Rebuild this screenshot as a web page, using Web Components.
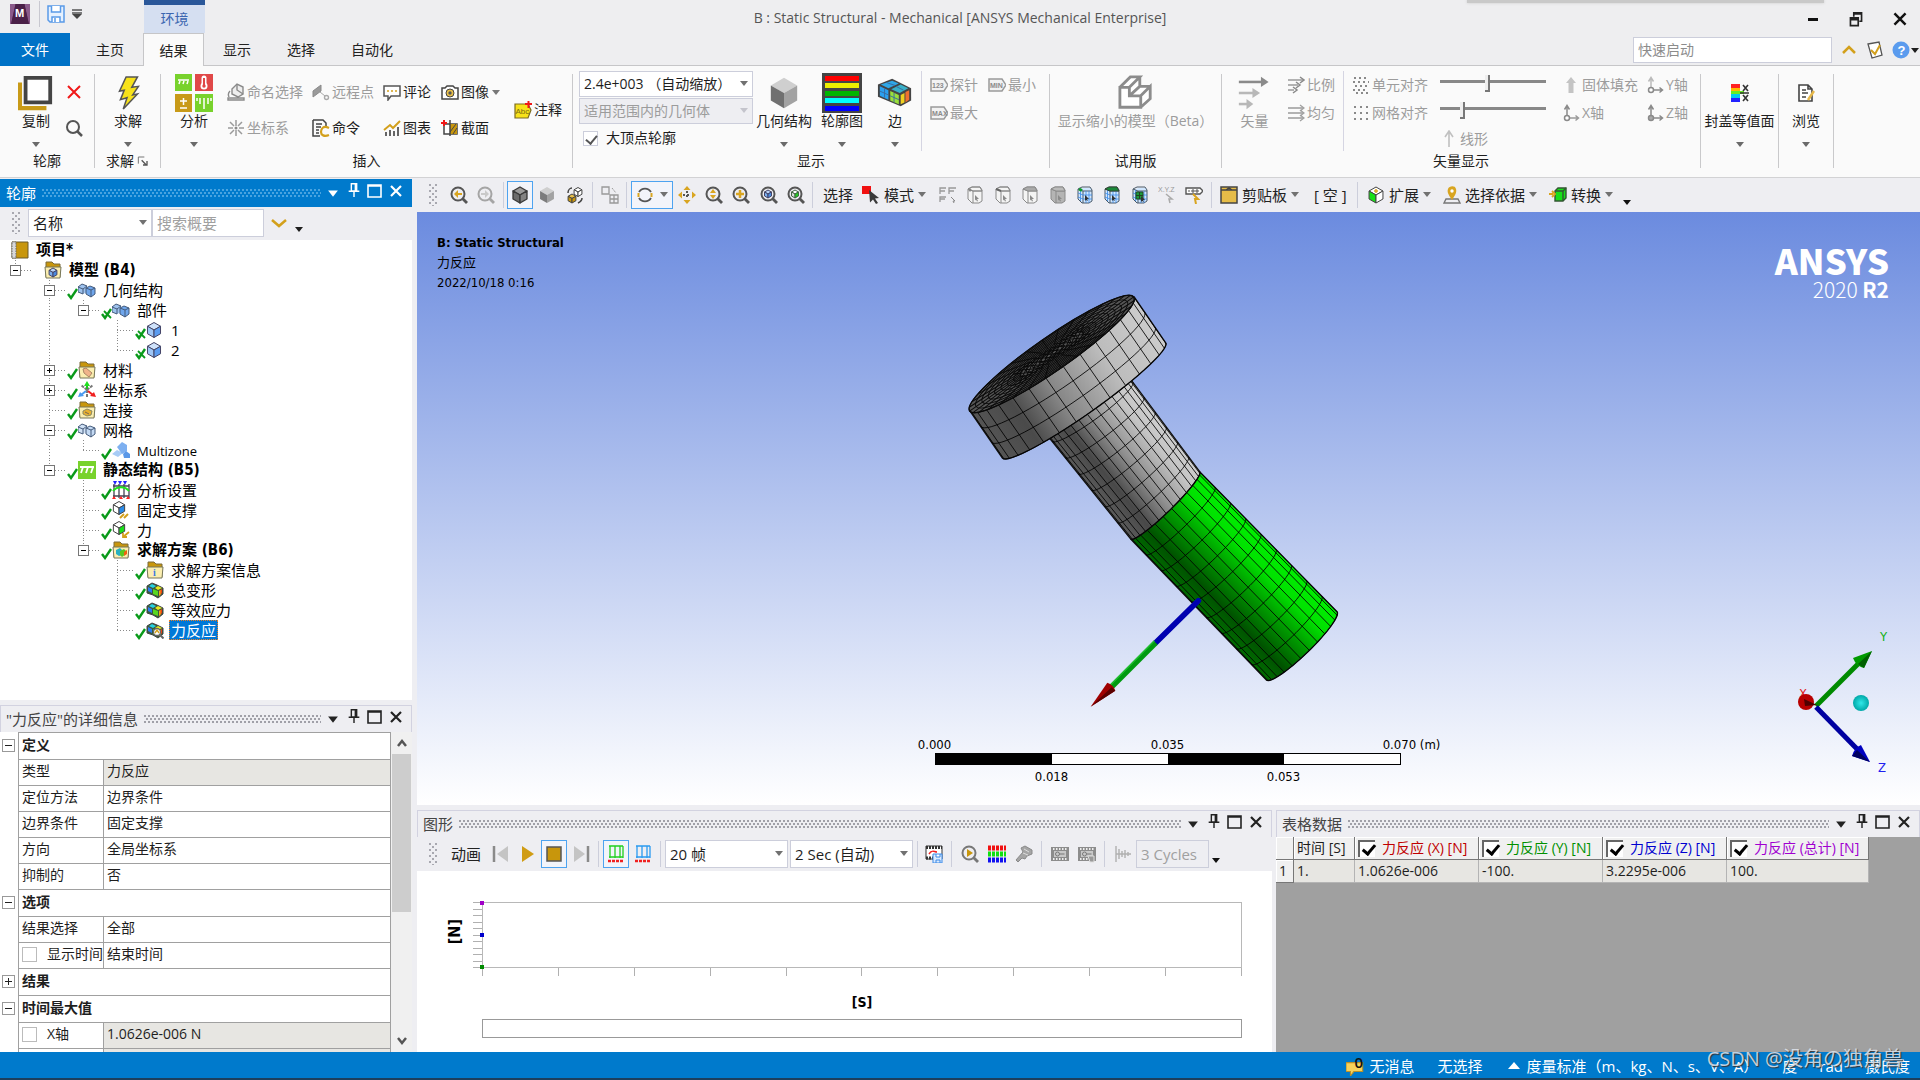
<!DOCTYPE html>
<html lang="zh-CN">
<head>
<meta charset="utf-8">
<title>B : Static Structural - Mechanical</title>
<style>
html,body{margin:0;height:100%}
body{font:14px/18px "Open Sans","Noto Sans CJK SC",sans-serif;color:#1e1e1e;background:#eeeef2;overflow:hidden}
</style>
</head>
<body>
<mech-app></mech-app>
<script>
/* ---------- helpers ---------- */
const BASE = `*{box-sizing:border-box}
button,select,input{font:inherit;color:inherit;margin:0}
button{background:none;border:0;padding:0}
.off{color:#9c9c9c}`;
function define(tag, css, html, after) {
  const t = document.createElement('template');
  customElements.define(tag, class extends HTMLElement {
    connectedCallback() {
      if (this.shadowRoot) return;
      t.innerHTML = `<style>${BASE}${css}</style>` + (typeof html === 'function' ? html(this) : html);
      this.attachShadow({mode: 'open'}).append(t.content.cloneNode(true));
      if (after) after(this.shadowRoot, this);
    }
  });
}
function cube(cx, cy, s, top, left, right, st = '#444', sw = 1) {
  const w = s * .87, h = s * .5, a = `stroke="${st}" stroke-width="${sw}" stroke-linejoin="round"`;
  return `<path d="M${cx} ${cy - s}l${w} ${h}l${-w} ${h}l${-w} ${-h}z" fill="${top}" ${a}/>` +
    `<path d="M${cx - w} ${cy - h}l${w} ${h}v${s}l${-w} ${-h}z" fill="${left}" ${a}/>` +
    `<path d="M${cx + w} ${cy - h}l${-w} ${h}v${s}l${w} ${-h}z" fill="${right}" ${a}/>`;
}
const mag = (st, inner, fill = 'none') => `<circle cx="8" cy="8" r="6.500" fill="${fill}" stroke="${st}" stroke-width="2"/><path d="M12.500 12.500l4.500 4.500" stroke="${st}" stroke-width="2.800"/>${inner}`;
const folder = inner => `<path d="M2 1h6l2 2h6v13H2z" fill="#c8960c" stroke="#7a6a3a" stroke-width="1"/><path d="M1 6h16l-1 11H2z" fill="#fbeeb0" stroke="#77775a" stroke-width="1"/>${inner}`;
const bars = (a, b) => `<path d="M0 6l4-3 5 2v6l-4 2-5-2z" fill="${a}"/><path d="M0 6l5 2 4-3M5 8v5M0 6v5l5 2" fill="none" stroke="#445a7a"/><path d="M8 7l4-2 5 2v6l-4 3-5-3z" fill="${b}"/><path d="M8 7l5 2 4-2M13 9v7M8 7v6l5 3 4-3V7l-5-2z" fill="none" stroke="#445a7a"/><path d="M0 6l4-3 5 2" fill="none" stroke="#445a7a"/>`;
const rainbow = `<path d="M1 5l5-3 5 2 6 3v6l-5 4-5-3-6-2z" fill="#3a5a3a" stroke="#444"/><path d="M2 6l4 2v4l-4-2z" fill="#2a7af0"/><path d="M3 5l3-2 4 2-3 2z" fill="#28d0e0"/><path d="M7 8l5 2v5l-5-2z" fill="#58d820"/><path d="M9 7l3-2 4 2-4 2z" fill="#e8e820"/><path d="M13 10l3-2v4l-3 3z" fill="#f04010"/><path d="M13 10l1.500-1v4.500L13 15z" fill="#f0b010"/>`;
const page = (top, left, right, st, extra = '') => `<path d="M2 3l4-2h8l2 3v11l-3 2H6l-4-4z" fill="${left}" stroke="${st}"/><path d="M2 3l5 2h9M7 5v12" fill="none" stroke="${st}"/><path d="M2 3l4-2h8l2 4H7z" fill="${top}" stroke="${st}"/>${extra}<path d="M9 9l4 4h-2l1 2-1 .5-1-2-1 1z" fill="${st}"/>`;
const tag3 = t => `<path d="M1 3h13l4 6-4 6H1z" fill="#f2f2f2" stroke="#9a9a9a" stroke-width="1.500"/><text x="2" y="12" font-size="7" font-weight="700" fill="#8a8a8a" font-family="Liberation Sans,sans-serif">${t}</text>`;
const axis = (hollow, up, side) => `<path d="M5 13V3M2.500 5.500L5 1.500l2.500 4" fill="none" stroke="${up}" stroke-width="1.500"/><path d="M8 14h8M13.500 11.500l3 2.500-3 2.500" fill="none" stroke="${side}" stroke-width="1.500"/><circle cx="5" cy="14" r="2.500" fill="${hollow}" stroke="#8a8a8a" stroke-width="1.500"/>`;
const film = `<path d="M0 2h18v14H0z" fill="#8c8c8c"/><path d="M2 4h14M2 14h14" stroke="#eee" stroke-width="2" stroke-dasharray="1.500 1.500"/><path d="M3 6h12v6H3z" fill="#c8c8c8"/><circle cx="6.500" cy="9" r="2" fill="none" stroke="#777"/><path d="M8.500 9h5" stroke="#777"/>`;
const mesh = `<path d="M3 4l4-2h8l1 2v11l-3 2H6l-4-4z" fill="#cfe6ff"/><path d="M2 3l4-2h8l2 3v11l-3 2H6l-4-4zM2 3l5 2h9M7 5v12" fill="none" stroke="#4a5a6a"/><path d="M10 5v12M13 5v12M7 9h9M7 13h9M2 7l5 2M2 11l5 2M4.500 4v11" stroke="#3a8ae8" stroke-width=".8"/>`;
const ICONS = {
  logo: `<path d="M0 0h18v18H0z" fill="#5a2a5a"/><path d="M0 0h5L1 18H0zM13 0h5v18h-1z" fill="#8a5a8a"/><path d="M5 0h8l4 18H1z" fill="#4a2048"/><text x="4.500" y="12" font-size="10" font-weight="700" fill="#fff" font-family="Liberation Sans,sans-serif">M</text>`,
  save: `<path d="M1 1h16v16H3l-2-2z" fill="#e6f1ff" stroke="#5a9ae8" stroke-width="1.500"/><path d="M4.500 1v6h9V1M5 17v-5h8v5M8 13v4" fill="#fff" stroke="#5a9ae8" stroke-width="1.500"/>`,
  qat: `<path d="M4 5h10M4 8h10" stroke="#555" stroke-width="1.500"/><path d="M4 9h10l-5 5z" fill="#444"/>`,
  down: `<path d="M5 7h8l-4 5z" fill="currentColor"/>`,
  min: `<path d="M4 9.500h10" stroke="#111" stroke-width="3"/>`,
  restore: `<path d="M4 8h7v7H4zM4 9.500h7M7 7V3.500h7V11h-2M7 4.500h7" fill="none" stroke="#222" stroke-width="1.500"/>`,
  close: `<path d="M4 4l10 10M14 4L4 14" stroke="currentColor" stroke-width="2.200"/>`,
  chevup: `<path d="M3 12l6-6 6 6" fill="none" stroke="#d3a01c" stroke-width="2.500"/>`,
  chevdown: `<path d="M2 6l7 6 7-6" fill="none" stroke="#d3a01c" stroke-width="2.500"/>`,
  checklist: `<path d="M2 3l11-2 3 13-10 3z" fill="#fff" stroke="#555" stroke-width="1.300"/><path d="M5 9l4 4 5-9" fill="none" stroke="#d3a01c" stroke-width="2"/>`,
  help: `<circle cx="9" cy="9" r="8.500" fill="#5a9bee"/><text x="5.500" y="14" font-size="13" font-weight="700" fill="#fff" font-family="Liberation Sans,sans-serif">?</text>`,
  copy: `<path d="M2 8v27h28" fill="none" stroke="#c89a18" stroke-width="4.500"/><path d="M8 3h26v26H8z" fill="#fff" stroke="#444" stroke-width="4"/>`,
  redx: `<path d="M3 3l12 12M15 3L3 15" stroke="#f01818" stroke-width="2"/>`,
  search: `<circle cx="8" cy="8" r="6" fill="none" stroke="#555" stroke-width="2"/><path d="M12 12l5 5" stroke="#555" stroke-width="2.500"/>`,
  solve: `<path transform="translate(3 0)" d="M14 2h12l-6 11 7-1-6 9 5-1L11 36l4-12-7 2 4-10-5 1z" fill="#f7e21a" stroke="#555" stroke-width="1.600"/>`,
  analysis: `<path d="M0 0h17v17H0z" fill="#78d22c"/><path d="M20 0h18v17H20z" fill="#e04848"/><path d="M0 20h17v18H0z" fill="#c89a18"/><path d="M20 20h18v18H20z" fill="#78d22c"/><path d="M3 6h11M5 7l-1 3M9 7l-1 3M13 7l-1 3" stroke="#fff" stroke-width="1.500"/><path d="M29 4v6" stroke="#fff" stroke-width="5" stroke-linecap="round"/><circle cx="29" cy="12" r="3.500" fill="#fff"/><path d="M29 4v7" stroke="#e04848" stroke-width="2"/><circle cx="29" cy="12" r="1.700" fill="#e04848"/><path d="M5 27h7M8.500 24v7M5 34h7" stroke="#fff" stroke-width="1.500"/><path d="M29 24v11M25 24v6M33 24v6M22 24v3M36 24v3" stroke="#fff" stroke-width="1.500"/>`,
  named: `<path d="M1 15h16v2H1zM5 6l5-5 6 3v7l-5 3-6-3z" fill="#eee" stroke="#8a8a8a" stroke-width="1.400"/><path d="M10 1v6l6 4M3 8c-2 2-2 4-1 6" fill="none" stroke="#8a8a8a" stroke-width="1.400"/>`,
  csys: `<path d="M9 1v6M9 11v6M1 9h5M12 9h5M3 3l4 4M15 3l-4 4M3 15l4-4M15 15l-4-4" stroke="#9a9a9a" stroke-width="1.500"/><circle cx="9" cy="9" r="1.500" fill="#8a8a8a"/>`,
  remote: `<path d="M1 8l8-6v6L1 14z" fill="#9a9a9a" stroke="#8a8a8a"/><path d="M8 9l5 4" stroke="#aaa"/><circle cx="14.500" cy="14.500" r="2" fill="none" stroke="#aaa" stroke-width="1.400"/>`,
  cmd: `<path d="M1 1h10l3 3v4M1 1v16h7" fill="none" stroke="#444" stroke-width="1.500"/><path d="M4 5h6M4 8h5M4 11h3M4 14h3" stroke="#444" stroke-width="1.500"/><path d="M17 9c-6-3-8 1-8 4s3 5 8 3" fill="none" stroke="#d3a01c" stroke-width="2.200"/>`,
  comment: `<path d="M1 3h16v10H8l-3 4v-4H1z" fill="#fff" stroke="#555" stroke-width="1.500"/><path d="M4 8h10" stroke="#d3a01c" stroke-width="1.500" stroke-dasharray="2"/>`,
  chart: `<path d="M1 11l6-5 3 3 7-7" fill="none" stroke="#d3a01c" stroke-width="2"/><path d="M3 17v-4M7 17v-6M11 17v-5M15 17V8" stroke="#555" stroke-width="1.800"/>`,
  camera: `<path d="M1 5h3l2-2h6l2 2h3v11H1z" fill="#fff" stroke="#444" stroke-width="1.500"/><circle cx="9" cy="10" r="4" fill="#e9c04a" stroke="#444"/><circle cx="9" cy="10" r="1.700" fill="#555"/>`,
  section: `<path d="M3 5h13v10H3z" fill="#fff" stroke="#444" stroke-width="1.500"/><path d="M9 5h7v10H9z" fill="#c8960c"/><path d="M9 13l6-8M12 15l4-6" stroke="#444"/><path d="M9 1v16" stroke="#444" stroke-width="1.500"/><path d="M0 4h6M3 1v6" stroke="#f01818" stroke-width="2"/>`,
  note: `<path d="M1 3h13l3 6-3 8H1z" fill="#f7e21a" stroke="#7a6a20" stroke-width="1.200"/><text x="1.500" y="13" font-size="8" fill="#7a6a10" font-family="Liberation Sans,sans-serif">Abc</text><path d="M11 3h7M14.500 0v7" stroke="#f01818" stroke-width="2"/>`,
  geo: cube(19, 19, 16, '#cfcfcf', '#707070', '#a2a2a2', 'none', 0),
  contour: `<path d="M0 0h40v40H0z" fill="#444"/><path d="M3 3h34v5H3z" fill="#f00"/><path d="M3 10h34v5H3z" fill="#ee0"/><path d="M3 18h34v5H3z" fill="#00b400"/><path d="M3 25h34v5H3z" fill="#0ff"/><path d="M3 33h34v5H3z" fill="#00f"/>`,
  edge: `<path d="M1 10l15-6 20 10v13L25 33 1 23z" fill="#444"/><path d="M4 10l12-4 7 3-11 5z" fill="#2fa8e8"/><path d="M15 15l10-5 8 4-9 5z" fill="#38b0c8"/><path d="M3 12l9 4v10l-9-4z" fill="#2aa0f0"/><path d="M14 17l9 4v10l-9-4z" fill="#9ae03a"/><path d="M25 21l4-2v10l-4 2z" fill="#f0d020"/><path d="M30 18l4-2v10l-4 3z" fill="#f07030"/><path d="M14 22l9 4M18 19v10M3 17l9 4M8 14v10M10 8l9 3M20 12l8 4" stroke="#3a6aa0"/>`,
  probe: tag3('123'), pmax: tag3('MAX'), pmin: tag3('MIN'),
  shrink: `<path d="M2 13L13 2h10v9l11 4v10L24 34H2z" fill="#fff"/><path d="M2 13h10v9h12v12H2zM2 13L13 2h10L12 13M23 2v10L12 22M24 22l10-10v13L24 34M23 12h11" fill="none" stroke="#8c8c8c" stroke-width="3"/>`,
  vector: `<path d="M1 7h28" stroke="#8a8a8a" stroke-width="3"/><path d="M27 1l9 6-9 6z" fill="#8a8a8a"/><path d="M1 20h18" stroke="#b8b8b8" stroke-width="3"/><path d="M17 14l9 6-9 6z" fill="#b8b8b8"/><path d="M1 33h11" stroke="#b8b8b8" stroke-width="3"/><path d="M10 27l8 6-8 6z" fill="#b8b8b8"/>`,
  prop: `<path d="M1 4h15M1 9h10M1 14h6" stroke="#9a9a9a" stroke-width="1.500"/><path d="M13 1l4 3-4 3M9 6l4 3-4 3M6 11l4 3-4 3" fill="none" stroke="#8a8a8a" stroke-width="1.500"/>`,
  uni: `<path d="M1 4h15M1 9h15M1 14h15" stroke="#9a9a9a" stroke-width="1.500"/><path d="M13 1l4 3-4 3M13 6l4 3-4 3M13 11l4 3-4 3" fill="none" stroke="#a0a0a0" stroke-width="1.300"/>`,
  elal: `<path d="M2 2h14M1 6h16M3 10h14M1 14h15M4 17h13" stroke="#8a8a8a" stroke-width="2" stroke-dasharray="2 3"/>`,
  gral: `<path d="M2 3h15M2 9h15M2 15h15" stroke="#8a8a8a" stroke-width="2" stroke-dasharray="2 4"/>`,
  linef: `<path d="M9 17V2M5 7l4-6 4 6" fill="none" stroke="#c0c0c0" stroke-width="1.600"/>`,
  solid: `<path d="M9 1l5 6h-2.500v10h-5V7H4z" fill="#c4c4c4"/>`,
  ax: axis('#fff', '#8a8a8a', '#9a9a9a'), ay: axis('#fff', '#bbb', '#8a8a8a'), az: axis('#aaa', '#8a8a8a', '#8a8a8a'),
  capped: `<path d="M0 0h9v4H0z" fill="#f22"/><path d="M0 4h9v3H0z" fill="#fb0"/><path d="M0 7h13v3H0z" fill="#6e2"/><path d="M0 10h9v4H0z" fill="#0ce"/><path d="M0 14h9v4H0z" fill="#22f"/><path d="M12 1l5 6M17 1l-5 6M12 11l5 6M17 11l-5 6M9 9h9" stroke="#333" stroke-width="1.600"/>`,
  browse: `<path d="M2 1h9l4 4v12H2zM11 1v4h4" fill="#fff" stroke="#444" stroke-width="1.600"/><path d="M5 6h4M5 9h6M5 13h4" stroke="#444" stroke-width="1.400"/><path d="M17 7l-6 9" stroke="#e6b84a" stroke-width="2.500"/>`,
  launch: `<path d="M2 13V3h9" fill="none" stroke="#777" stroke-width="1.500"/><path d="M7 8l7 7M15 9v6H9" fill="none" stroke="#555" stroke-width="2"/>`,
  pin: `<path d="M6 2h6v8H6zM10.500 2v8M3 10.500h12M9 11v6" fill="none" stroke="currentColor" stroke-width="1.600"/>`,
  max: `<path d="M2 3h13v12H2zM2 4h13" fill="none" stroke="currentColor" stroke-width="1.600"/>`,
  book: `<path d="M1 1h16v16H1z" fill="#c8960c" stroke="#6a5a2a"/><path d="M1 1h4v16H1z" fill="#d8d8d8" stroke="#666" stroke-dasharray="1.500 1"/>`,
  model: folder(cube(9, 11.500, 4.500, '#b8d4f8', '#7ab0f0', '#4a8ae0', '#446')),
  geom: bars('#9ec2ee', '#6fa6ec'), meshi: bars('#cfe0f4', '#c4daf4'),
  body: cube(8, 9, 7.500, '#cfe2fa', '#9ec6f6', '#5a9cf0', '#446'),
  mat: folder(`<path d="M5 8l3-1 6 5-3 4-5-4z" fill="#f0b48a" stroke="#a86"/>`),
  cs: `<path d="M9 9L3 4M9 9l6-5M9 9v8" stroke="#777" stroke-width="2" stroke-dasharray="3 1"/><path d="M9 8V2" stroke="#20c020" stroke-width="2"/><path d="M6 5l3-5 3 5z" fill="#20e020"/><path d="M8 10l-5 4" stroke="#4a9af0" stroke-width="2"/><path d="M0 16l2-5 4 4z" fill="#4a9af0"/><path d="M10 10l5 4" stroke="#f02020" stroke-width="2"/><path d="M18 16l-6-1 4-4z" fill="#f02020"/>`,
  conn: folder(`<path d="M5 10l4-2 5 2-1 4-4 1-4-2z" fill="#e8b030" stroke="#886"/><path d="M7 11l4 2" stroke="#765"/>`),
  mz: `<path d="M0 13l5-4 6 3-5 4z" fill="#a8ccf6"/><path d="M5 6l5-5 5 3v6l-5 3z" fill="#7eb0f0"/><path d="M11 13l3-3 4 3v4h-6z" fill="#5a98e8"/>`,
  stat: `<path d="M0 0h18v18H0z" fill="#78d22c"/><path d="M2 6h14M5 6l-2 6M10 6l-2 6M15 6l-2 6" stroke="#fff" stroke-width="1.800"/>`,
  aset: `<path d="M1 5h16M1 15h16M2 3v14M7 3v14M12 3v14M17 3v14" stroke="#445" stroke-width="1.300"/><path d="M1 10c4-5 12-5 16 0" fill="none" stroke="#20e020" stroke-width="2"/><path d="M1 0h4L3 4zM6 0h4L8 4zM11 0h4l-2 4z" fill="#22f"/><path d="M0 18l2-3 2 3zM7 18l2-3 2 3zM14 18l2-3 2 3z" fill="#f22"/>`,
  fix: cube(7, 7, 6.500, '#fff', '#fff', '#2a8ae8') + `<path d="M8 17l4-4M12 17l4-4" stroke="#d3a01c" stroke-width="2"/>`,
  force: cube(7, 7, 6.500, '#fff', '#fff', '#18e018') + `<path d="M17 11l-6 5M15 16h-4v-4" fill="none" stroke="#d3a01c" stroke-width="1.800"/>`,
  sol: folder(`<path d="M4 9l4-2 2 2v5l-3 1-3-2z" fill="#28b0c0"/><path d="M8 10l4-2 2 2v3l-4 3-2-2z" fill="#58c820"/><path d="M12 11l3-2v4l-3 2z" fill="#f06010"/>`),
  info: folder(`<text x="7" y="15" font-size="10" font-weight="700" fill="#3a7ae0" font-family="Liberation Serif,serif">i</text>`),
  res: rainbow,
  fr: rainbow + `<circle cx="11" cy="11" r="3.500" fill="#fff" stroke="#666" stroke-width="1.300"/><path d="M13.500 13.500l4 4" stroke="#666" stroke-width="2"/><path d="M9 12l2-3 2 3" stroke="#d3a01c" fill="none" stroke-width="1.400"/>`,
  zback: mag('#555', `<path d="M4 8l4-4v3h4v2H8v3z" fill="#d9a520"/>`), zfwd: mag('#a5a5a5', `<path d="M12 8L8 4v3H4v2h4v3z" fill="#c9c9c9"/>`),
  shade: cube(9, 9, 8, '#9a9a9a', '#6c6c6c', '#828282', '#3a3a3a', 1.400),
  shade2: cube(9, 9, 8, '#cfcfcf', '#7c7c7c', '#a2a2a2', 'none', 0),
  swap: cube(12, 6, 4.500, '#fff', '#fff', '#fff') + cube(6, 12.500, 4.500, '#e9c04a', '#c8960c', '#c8960c') + `<path d="M2 7c0-3 2-5 4-5M16 12c0 3-2 4-4 5" fill="none" stroke="#444" stroke-width="1.500"/>`,
  vis: `<path d="M1 1h7v7H1zM9 9h8v8H9zM13 9v8M9 13h8" fill="none" stroke="#999" stroke-width="1.300"/><path d="M11 2l4 5" stroke="#999" stroke-dasharray="2 1"/>`,
  rot: `<path d="M3 6a7 7 0 0 1 12 0M3 12a7 7 0 0 0 12 0" fill="none" stroke="#555" stroke-width="1.800"/><path d="M2.500 7v4M15.500 7v4" stroke="#d9a520" stroke-width="2"/>`,
  move: `<path d="M9 0l3.500 4h-7zM9 18l3.500-4h-7zM0 9l4-3.500v7zM18 9l-4-3.500v7z" fill="#d9a520"/><path d="M9 5v8M5 9h8" stroke="#555" stroke-width="2" stroke-dasharray="2"/>`,
  zud: mag('#555', `<path d="M8 3l3 4H5zM8 13l3-4H5z" fill="#d9a520"/>`), zin: mag('#555', `<path d="M8 4v8M4 8h8" stroke="#d9a520" stroke-width="2.500"/>`),
  zfit: mag('#555', cube(8, 8, 4, '#b8d4f8', '#7ab0f0', '#4a8ae0', '#446')), zsel: mag('#555', cube(8, 8, 4, '#fff', '#ddd', '#2c2', '#464')),
  rcur: `<path d="M0 0h9v8H0z" fill="#f01010"/><path d="M7 4l10 8-4 .5 3 4.500-2 1-3-4.500-3 3z" fill="#3a3a3a"/>`,
  sel0: `<path d="M1 8V2h6M10 8V2h7M1 16v-5h6M1 5h5M10 5h5M1 13h5" fill="none" stroke="#999" stroke-width="1.300"/><path d="M12 11l4 4h-2l1 2" stroke="#888" fill="none"/>`,
  sel1: page('none', '#f4f4f4', '', '#8a8a8a', '<circle cx="4" cy="4" r="1.500" fill="#888"/>'),
  sel2: page('none', '#f4f4f4', '', '#8a8a8a', '<path d="M2 3l5 2" stroke="#666" stroke-width="2"/>'),
  sel3: page('#aaa', '#f4f4f4', '', '#8a8a8a'), sel4: page('#bbb', '#b4b4b4', '', '#8a8a8a'),
  sel5: mesh + `<path d="M3 3l3 1.500" stroke="#0a9a2a" stroke-width="3"/><path d="M9 9l4 4h-2l1 2-2-1-1 1z" fill="#333"/>`,
  sel6: mesh + `<path d="M2 3l4-2h8l2 4H7z" fill="#1a8a3a" stroke="#343"/><path d="M9 9l4 4h-2l1 2-2-1-1 1z" fill="#333"/>`,
  sel7: mesh + `<path d="M5 6h7v7H5z" fill="#1a9a3a" stroke="#242"/><path d="M5 9.500h7M8.500 6v7" stroke="#242"/><path d="M10 10l4 4h-2l1 2-2-1-1 1z" fill="#333"/>`,
  xyz: `<text x="0" y="6" font-size="7" fill="#999" font-family="Liberation Sans,sans-serif">X.Y.Z</text><path d="M8 8l6 5h-3l1 4" fill="none" stroke="#aaa" stroke-width="1.500"/>`,
  lbl: `<path d="M1 2h14l3 3-3 3H1z" fill="#fff" stroke="#555" stroke-width="1.400"/><path d="M4 4v2M7 4h2v2H7zM11 4h2v2h-2z" stroke="#555" fill="none"/><path d="M8 8l5 5h-3l1 5" fill="none" stroke="#d9a520" stroke-width="2"/>`,
  clip: `<path d="M1 1h16v16H1z" fill="#e6bc48" stroke="#444" stroke-width="1.500"/><path d="M1 4h16M6 4l3-2 3 2" stroke="#444" stroke-width="1.500" fill="none"/>`,
  ext: cube(9, 9, 8, '#fff', '#18e018', '#fff') + `<path d="M7 5h4M9 3v4" stroke="#d9a520" stroke-width="1.500"/>`,
  loc: `<path d="M1 17l2-4h12l2 4z" fill="none" stroke="#777" stroke-width="1.400"/><path d="M9 14C5 8 4 6 5 3s7-4 8 0-1 6-4 11z" fill="#d9a520"/><circle cx="9" cy="5" r="1.700" fill="#fff"/>`,
  conv: `<path d="M6 5l3-3h8v10l-3 3H6z" fill="#18e018" stroke="#353" stroke-width="1.400"/><path d="M6 5h8v10M14 5l3-3" fill="none" stroke="#353" stroke-width="1.400"/><path d="M0 8h4M3 5l3 3-3 3" stroke="#d9a520" stroke-width="1.800" fill="none"/>`,
  first: `<path d="M2 1v16" stroke="#8a8a8a" stroke-width="2.500"/><path d="M16 1v16L5 9z" fill="#c4c4c4"/>`,
  last: `<path d="M16 1v16" stroke="#8a8a8a" stroke-width="2.500"/><path d="M2 1v16l11-8z" fill="#c4c4c4"/>`,
  play: `<path d="M3 1v16l12-8z" fill="#d09c14"/>`,
  stop: `<path d="M2 2h14v14H2z" fill="#c8960c" stroke="#555" stroke-width="1.500"/>`,
  g1: `<path d="M2 1h14M3 1v12M8 1v12M13 1v12M16 1v12M2 12h14" stroke="#20d020" stroke-width="1.300"/><path d="M1 16h16" stroke="#f02020" stroke-width="2.500" stroke-dasharray="3 1"/>`,
  g2: `<path d="M2 1h14M3 1v12M8 1v12M13 1v12M16 1v12M2 12h14" stroke="#2a9af0" stroke-width="1.300"/><path d="M1 16h16" stroke="#f02020" stroke-width="2.500" stroke-dasharray="3 1"/>`,
  exp: `<path d="M1 1h16v13H1z" fill="#fff" stroke="#333"/><path d="M1 2.500h16M1 13h8" stroke="#333" stroke-width="3" stroke-dasharray="2 1"/><path d="M4 9c3-5 5-2 8-2" fill="none" stroke="#f02020" stroke-width="1.500"/><path d="M8 9h9v9H8zM11 9v3h4V9M11 18v-3h4v3" fill="#dbeafd" stroke="#3a8ae8"/>`,
  zplay: mag('#777', `<path d="M6 4l6 4-6 4z" fill="#c8960c"/>`),
  rgb: `<path d="M0 3h18" stroke="#f01010" stroke-width="5" stroke-dasharray="3 1"/><path d="M0 9h18" stroke="#10e010" stroke-width="5" stroke-dasharray="3 1"/><path d="M0 15h18" stroke="#1010f0" stroke-width="5" stroke-dasharray="3 1"/>`,
  upd: `<path d="M1 15l7-8-2-4 4-2 7 4v4l-5 2-2 3-3-1-4 4z" fill="#a5a5a5" stroke="#8a8a8a"/><path d="M9 4l5 3M8 8l5 2" stroke="#ddd"/>`,
  film1: film, film2: film + `<path d="M10 11h6v6h-4z" fill="#999" stroke="#ddd"/>`,
  wave: `<path d="M2 1v16M2 9h15M5 4v10M8 6v6M11 5v8M14 7v4" stroke="#b0b0b0" stroke-width="1.400"/>`,
  msg: `<path d="M0 6h15v8H7l-3 4v-4H0z" fill="#f6d25a" stroke="#b8902a"/>`,
  up: `<path d="M3 12l6-7 6 7z" fill="#fff"/>`
};
define('ui-icon', ':host{display:inline-flex;flex:none}svg{display:block}', el => {
  const n = el.getAttribute('name'), s = +el.getAttribute('size') || 18, v = +el.getAttribute('box') || 18;
  return `<svg width="${s}" height="${s}" viewBox="0 0 ${v} ${v}" aria-hidden="true">${ICONS[n] || ''}</svg>`;
});
const ic = (n, s, b) => `<ui-icon name="${n}"${s ? ` size="${s}"` : ''}${b ? ` box="${b}"` : ''}></ui-icon>`;

/* ---------- title bar and tabs ---------- */
define('mech-titlebar', `
:host{display:block;height:66px;background:#eeeef0;border-bottom:1px solid #c6c6c8}
.top{display:flex;height:33px;align-items:flex-start}
.side{flex:1;display:flex;align-items:flex-start}
.quick{display:flex;align-items:center;width:144px;height:28px;padding-left:10px}
.quick i{width:1px;height:26px;background:#c8c8d0;margin:0 7px 0 9px}
.quick button{display:flex;margin-right:3px}
.env{width:61px;height:33px;background:#d5dff1;border-top:5px solid #2a579a;color:#3c66b0;text-align:center;line-height:28px}
h1{margin:0;font:inherit;color:#555;line-height:36px}
.right{justify-content:flex-end}
.shade{width:357px;height:3px;background:#c9c9c9;box-shadow:0 0 3px #c9c9c9}
.win{display:flex;gap:24px;padding:9px 10px 0 0;margin-left:-20px}
.win button{color:#111}
.tabs{display:flex;height:33px;align-items:flex-end}
.tabs button{height:33px;padding:0 18px;line-height:32px;color:#222}
.tabs .file{width:70px;padding:0;background:#0072c6;color:#fff;margin-right:8px}
.tabs .on{background:#fafafa;border:1px solid #c6c6c8;border-bottom:0;padding:0 15px;line-height:31px;width:61px;margin:0 1px}
.find{margin-left:auto;display:flex;align-items:center;gap:8px;height:33px}
.find input{width:199px;height:26px;border:1px solid #cccedb;background:#fff;padding:0 4px;outline:0}
.find input::placeholder{color:#8c8c8c;opacity:1}
.find span{display:flex}.find span ui-icon+ui-icon{margin:0 -4px}
`, `
<div class="top"><div class="side"><div class="quick">${ic('logo', 20)}<i></i><button aria-label="save">${ic('save')}</button><button aria-label="customize">${ic('qat', 18)}</button></div><div class="env">环境</div></div>
<h1>B : Static Structural - Mechanical [ANSYS Mechanical Enterprise]</h1>
<div class="side right"><div class="shade"></div><div class="win"><button aria-label="minimize">${ic('min')}</button><button aria-label="restore">${ic('restore', 20)}</button><button aria-label="close">${ic('close', 20)}</button></div></div></div>
<div class="tabs"><button class="file">文件</button><button>主页</button><button class="on">结果</button><button>显示</button><button>选择</button><button>自动化</button>
<div class="find"><input aria-label="快速启动" placeholder="快速启动">${ic('chevup')}${ic('checklist')}<span>${ic('help')}${ic('down')}</span></div></div>`);

/* ---------- ribbon parts ---------- */
define('rib-group', `
:host{display:flex;flex-direction:column;height:111px}
.body{height:85px;display:flex;align-items:flex-start}
.label{height:20px;line-height:18px;display:flex;align-items:center;justify-content:center;gap:3px;white-space:nowrap;color:#1e1e1e}
`, el => `<div class="body"><slot></slot></div><div class="label">${el.getAttribute('label') || ''}${el.hasAttribute('launch') ? ic('launch', 12) : ''}</div>`);
define('rib-sep', `:host{display:block;flex:none;width:1px;height:94px;margin-top:8px;background:#c9c9cb}:host([short]){height:80px;margin-top:5px;background:#d5d5e2}`, '');
define('rib-big', `
:host{display:block;flex:none}
button{display:flex;flex-direction:column;align-items:center;width:100%;padding-top:8px;white-space:nowrap}
.ic{height:38px;display:flex;align-items:center}
.t{height:18px;line-height:18px}
i{margin-top:12px;border:4px solid transparent;border-top:5px solid #6a6a6a;border-bottom:0}
:host([off]){color:#9c9c9c}
`, el => `<button${el.hasAttribute('off') ? ' disabled' : ''}><span class="ic">${ic(el.getAttribute('icon'), el.getAttribute('size') || 36, el.getAttribute('box') || 38)}</span><span class="t"><slot></slot></span>${el.hasAttribute('drop') ? '<i></i>' : ''}</button>`);
define('rib-btn', `
:host{display:flex;height:28px;align-items:center}
button{display:flex;align-items:center;gap:2px;height:28px;white-space:nowrap}
:host([off]) button{color:#9c9c9c}
i{margin-left:1px;border:4px solid transparent;border-top:5px solid #777;border-bottom:0}
`, el => `<button${el.hasAttribute('off') ? ' disabled' : ''}>${ic(el.getAttribute('icon'), el.getAttribute('size'))}<slot></slot>${el.hasAttribute('drop') ? '<i></i>' : ''}</button>`);
define('mini-select', `
:host{display:block;position:relative;flex:none}
select{appearance:none;width:100%;height:100%;border:1px solid #cccedb;border-radius:0;background:#fff;padding:0 20px 0 4px;color:#1e1e1e;outline:0;opacity:1}
select:disabled{background:#eeeef2;color:#9c9c9c}
i{position:absolute;right:5px;top:50%;margin-top:-3px;border:4px solid transparent;border-top:5px solid #717171;border-bottom:0;pointer-events:none}
:host([off]) i{border-top-color:#c4c4cc}
`, el => `<select aria-label="${el.getAttribute('label')}"${el.hasAttribute('off') ? ' disabled' : ''}><option>${el.getAttribute('value')}</option></select><i></i>`);
define('mech-ribbon', `
:host{display:flex;height:112px;background:#fafafa;border-bottom:1px solid #d2d2d4}
.g1{width:94px}.g2{width:65px}.g3{width:411px}.g4{width:476px}.g5{width:171px}.g6{width:478px}.g7{width:77px}.g8{width:54px}
.grid{display:grid;grid-auto-rows:36px;padding-top:8px;align-items:center}
.ins{grid-template-columns:85px 71px 58px 73px}
.col{display:flex;flex-direction:column}
.tools{display:grid;grid-auto-rows:36px;padding-top:8px;align-items:center}
.combos{width:174px;padding-top:5px;gap:1px;margin-left:6px}
.combos mini-select{height:26px}
label{display:flex;align-items:center;gap:8px;padding-left:4px;height:26px}
label input{appearance:none;width:15px;height:15px;border:1px solid #cccedb;background:#fff;position:relative}
label input:checked::after{content:"";position:absolute;left:4px;top:1px;width:5px;height:9px;border:solid #555;border-width:0 2px 2px 0;transform:rotate(40deg)}
.rows{display:grid;grid-auto-rows:28px;padding-top:5px}
.slides{grid-auto-rows:27px;width:122px}
.slide{display:flex;align-items:flex-start;padding-top:3px}
input[type=range]{appearance:none;width:106px;height:18px;background:linear-gradient(#888,#888) 0 6px/100% 3px no-repeat;opacity:1}
input[type=range]::-webkit-slider-thumb{appearance:none;width:5px;height:17px;background:#eee;border:1px solid #777;border-width:0 2px 2px 0}
`, `
<rib-group class="g1" label="轮廓"><rib-big icon="copy" drop style="width:58px;margin-left:7px">复制</rib-big><div class="tools"><rib-btn icon="redx" aria-label="delete"></rib-btn><rib-btn icon="search" aria-label="find"></rib-btn></div></rib-group><rib-sep></rib-sep>
<rib-group class="g2" label="求解" launch><rib-big icon="solve" drop style="width:66px">求解</rib-big></rib-group><rib-sep></rib-sep>
<rib-group class="g3" label="插入"><rib-big icon="analysis" size="38" drop style="width:66px">分析</rib-big>
<div class="grid ins"><rib-btn icon="named" off>命名选择</rib-btn><rib-btn icon="remote" off>远程点</rib-btn><rib-btn icon="comment">评论</rib-btn><rib-btn icon="camera" drop>图像</rib-btn><rib-btn icon="csys" off>坐标系</rib-btn><rib-btn icon="cmd">命令</rib-btn><rib-btn icon="chart">图表</rib-btn><rib-btn icon="section">截面</rib-btn></div>
<rib-btn icon="note" style="margin-top:30px">注释</rib-btn></rib-group><rib-sep></rib-sep>
<rib-group class="g4" label="显示"><div class="col combos"><mini-select label="比例" value="2.4e+003 （自动缩放）"></mini-select><mini-select label="范围" value="适用范围内的几何体" off></mini-select><label><input type="checkbox" checked>大顶点轮廓</label></div>
<rib-big icon="geo" drop style="width:62px">几何结构</rib-big><rib-big icon="contour" size="40" box="40" drop style="width:54px">轮廓图</rib-big><rib-big icon="edge" drop style="width:52px">边</rib-big><rib-sep short></rib-sep>
<div class="rows" style="grid-template-columns:58px 60px;margin-left:8px"><rib-btn icon="probe" off>探针</rib-btn><rib-btn icon="pmin" off>最小</rib-btn><rib-btn icon="pmax" off>最大</rib-btn></div></rib-group><rib-sep></rib-sep>
<rib-group class="g5" label="试用版"><rib-big icon="shrink" off style="width:171px">显示缩小的模型（Beta）</rib-big></rib-group><rib-sep></rib-sep>
<rib-group class="g6" label="矢量显示"><rib-big icon="vector" size="34" box="40" off style="width:65px">矢量</rib-big>
<div class="rows" style="width:56px"><rib-btn icon="prop" off>比例</rib-btn><rib-btn icon="uni" off>均匀</rib-btn></div><rib-sep short></rib-sep>
<div class="rows" style="margin-left:8px;width:88px"><rib-btn icon="elal" off>单元对齐</rib-btn><rib-btn icon="gral" off>网格对齐</rib-btn></div>
<div class="rows slides"><div class="slide"><input type="range" aria-label="长度" min="0" max="100" value="45" disabled></div><div class="slide"><input type="range" aria-label="密度" min="0" max="100" value="20" disabled></div><rib-btn icon="linef" off>线形</rib-btn></div>
<div class="rows" style="grid-template-columns:84px 50px"><rib-btn icon="solid" off>固体填充</rib-btn><rib-btn icon="ay" off>Y轴</rib-btn><rib-btn icon="ax" off>X轴</rib-btn><rib-btn icon="az" off>Z轴</rib-btn></div></rib-group><rib-sep></rib-sep>
<rib-group class="g7"><rib-big icon="capped" size="18" box="18" drop style="width:77px">封盖等值面</rib-big></rib-group><rib-sep></rib-sep>
<rib-group class="g8"><rib-big icon="browse" size="18" box="18" drop style="width:54px">浏览</rib-big></rib-group><rib-sep></rib-sep>`);

/* ---------- docked panels ---------- */
define('dock-header', `
:host{display:flex;align-items:center;height:27px;flex:none;padding:0 6px 1px 5px;font-size:15px;color:#444;--dot:#a0a0a8;border:1px solid #d2d2e0;border-bottom:0;background:#eeeef2}
:host([active]){background:#007acc;color:#fff;--dot:#4aa4e0;border-color:#007acc;height:28px;padding-bottom:2px}
.dots{flex:1;height:8px;margin:0 3px 0 6px;background-image:radial-gradient(circle at 1px 1px,var(--dot) 1px,transparent 1px),radial-gradient(circle at 1px 1px,var(--dot) 1px,transparent 1px);background-size:4px 6px;background-position:0 0,2px 3px}
.b{display:flex;gap:3px;color:#222}:host([active]) .b{color:#fff}
.b button{display:flex;width:18px;justify-content:center}
`, `<slot></slot><span class="dots"></span><span class="b"><button aria-label="menu">${ic('down', 22)}</button><button aria-label="pin">${ic('pin', 16)}</button><button aria-label="maximize">${ic('max', 18)}</button><button aria-label="close">${ic('close', 18)}</button></span>`);
define('tool-grip', `:host{display:block;flex:none;width:8px;height:22px;background-image:radial-gradient(circle at 1px 1px,#a8a8b0 1px,transparent 1px),radial-gradient(circle at 1px 1px,#a8a8b0 1px,transparent 1px);background-size:6px 6px;background-position:0 0,3px 3px}`, '');

define('tree-row', `
:host{display:flex;height:20px;align-items:center;font-size:15px;color:#000;white-space:nowrap;--ln:#8a8a8a}
.g{width:34px;height:20px;flex:none}
.v{background:repeating-linear-gradient(var(--ln) 0 1px,transparent 1px 3px) 0 0/1px 100% no-repeat}
.half{background-size:1px 50%}
.n{width:29px;height:20px;flex:none;position:relative;display:flex;align-items:center}
.n::before{content:"";width:18px;height:1px;background:repeating-linear-gradient(90deg,var(--ln) 0 1px,transparent 1px 3px)}
.n svg{width:11px;height:12px;align-self:flex-end}
.x{position:absolute;left:-5px;top:5px;width:11px;height:11px;border:1px solid #777;background:linear-gradient(#000,#000) center/5px 1px no-repeat,#fff}
.plus{background:linear-gradient(#000,#000) center/5px 1px no-repeat,linear-gradient(#000,#000) center/1px 5px no-repeat,#fff}
.t{margin-left:5px;padding:0 2px;line-height:20px;height:20px}
:host([bold]) .t{font-weight:700;font-family:"DejaVu Sans Condensed","Noto Sans CJK SC",sans-serif}
:host([sel]) .t{background:#0078d7;color:#fff;outline:1px dotted #f08020;outline-offset:-1px}
`, el => {
  const g = el.getAttribute('guides') || '', x = el.getAttribute('x'), c = el.getAttribute('check');
  let h = '';
  for (const ch of g.slice(0, -1)) h += `<span class="g${ch === '|' ? ' v' : ''}"></span>`;
  const last = g.slice(-1);
  if (last) h += `<span class="n v${last === 'L' ? ' half' : ''}">${x ? `<span class="x${x === '+' ? ' plus' : ''}"></span>` : ''}${c ? `<svg viewBox="0 0 11 12"><path d="M1 6l3 4 6-9" fill="none" stroke="#0a9a1a" stroke-width="2.400"/>${c === 'x' ? '<path d="M3 3l7 7" stroke="#0a9a1a" stroke-width="1.800"/>' : ''}</svg>` : ''}</span>`;
  return h + ic(el.getAttribute('icon')) + '<span class="t"><slot></slot></span>';
});
const T = (g, icon, text, x = '', c = 'y', extra = '') => `<tree-row guides="${g}" icon="${icon}"${x ? ` x="${x}"` : ''}${c ? ` check="${c}"` : ''} ${extra}>${text}</tree-row>`;
define('outline-panel', `
:host{display:flex;flex-direction:column;flex:1;min-height:0;padding-top:1px}
.bar{display:flex;align-items:center;height:33px;flex:none;padding:0 0 2px 12px;font-size:15px}
.bar mini-select{width:124px;height:28px;margin-left:8px}
.bar input{width:112px;height:28px;border:1px solid #cccedb;padding:0 4px;margin-right:6px;outline:0}
.bar input::placeholder{color:#a0a0a0;opacity:1}
.bar button{display:flex}.bar button+button{margin:12px 0 0 2px}
.tree{flex:1;background:#fff;min-height:0;padding-left:15px}
.tree tree-row:first-child{margin-left:-4px}
`, `<dock-header active>轮廓</dock-header>
<div class="bar"><tool-grip></tool-grip><mini-select label="名称" value="名称"></mini-select><input aria-label="搜索概要" placeholder="搜索概要"><button aria-label="expand">${ic('chevdown')}</button><button aria-label="more">${ic('down')}</button></div>
<div class="tree">` +
  T('', 'book', '项目*', '', '', 'bold') +
  T('L', 'model', '模型 (B4)', '-', '', 'bold') +
  T(' |', 'geom', '几何结构', '-') + T(' |L', 'geom', '部件', '-', 'x') + T(' | |', 'body', '1', '', 'x') + T(' | L', 'body', '2', '', 'x') +
  T(' |', 'mat', '材料', '+') + T(' |', 'cs', '坐标系', '+') + T(' |', 'conn', '连接') + T(' |', 'meshi', '网格', '-') + T(' |L', 'mz', '<span style="font-size:13px">Multizone</span>') +
  T(' L', 'stat', '静态结构 (B5)', '-', 'y', 'bold') +
  T('  |', 'aset', '分析设置') + T('  |', 'fix', '固定支撑') + T('  |', 'force', '力') +
  T('  L', 'sol', '求解方案 (B6)', '-', 'y', 'bold') +
  T('   |', 'info', '求解方案信息') + T('   |', 'res', '总变形') + T('   |', 'res', '等效应力') + T('   L', 'fr', '力反应', '', 'y', 'sel') + `</div>`);

const G = (t, x = '-') => `<tr class="grp"><td class="x"><i class="${x === '+' ? 'plus' : ''}"></i></td><th colspan="2" scope="rowgroup">${t}</th></tr>`;
const D = (k, v, ro, cb) => `<tr><td class="x"></td><td class="k">${cb ? `<label><input type="checkbox">${k}</label>` : k}</td><td class="${ro ? 'ro' : ''}">${v}</td></tr>`;
define('details-panel', `
:host{display:flex;flex-direction:column;height:347px;flex:none}
.wrap{display:flex;flex:1;min-height:0;overflow:hidden;background:#fff}
.tb{flex:1;height:320px;overflow:hidden}
table{width:100%;border-collapse:separate;border-spacing:0;table-layout:fixed;border-right:1px solid #a0a0a0}
tr{height:26px}.grp{height:27px}
td,th{padding:0 4px 3px 3px;border:solid #a0a0a0;border-width:1px 0 0 1px;text-align:left;white-space:nowrap;overflow:hidden;line-height:18px}
th{font-weight:700}
.x{width:18px;padding:0 0 0 2px;border:0}
.x i{display:block;width:13px;height:13px;border:1px solid #999;background:linear-gradient(#222,#222) center/7px 1px no-repeat}
.x .plus{background:linear-gradient(#222,#222) center/7px 1px no-repeat,linear-gradient(#222,#222) center/1px 7px no-repeat}
.ro{background:#e7e6e2}
label{display:flex;align-items:center;gap:10px}
input{appearance:none;flex:none;width:15px;height:15px;border:1px solid #bbb;background:#fff}
.sb{width:21px;background:#f0f0f0;display:flex;flex-direction:column;align-items:center;padding:4px 0}
.sb b{width:19px;height:158px;background:#cdcdcd}
.sb svg{width:14px;height:14px;flex:none}
.sb svg:first-child{margin-bottom:4px}.sb svg:last-child{margin-top:auto}
`, `<dock-header>"力反应"的详细信息</dock-header><div class="wrap"><div class="tb"><table><colgroup><col style="width:18px"><col style="width:85px"><col></colgroup>` +
  G('定义') + D('类型', '力反应', 1) + D('定位方法', '边界条件') + D('边界条件', '固定支撑') + D('方向', '全局坐标系') + D('抑制的', '否') +
  G('选项') + D('结果选择', '全部') + D('显示时间', '结束时间', 0, 1) + G('结果', '+') + G('时间最大值') + D('X轴', '1.0626e-006 N', 1, 1) + D('', '', 1, 1) +
  `</table></div><div class="sb"><svg viewBox="0 0 14 14"><path d="M3 10l4-5 4 5" fill="none" stroke="#555" stroke-width="2.500"/></svg><b></b><svg viewBox="0 0 14 14"><path d="M3 4l4 5 4-5" fill="none" stroke="#555" stroke-width="2.500"/></svg></div></div>`);

/* ---------- graphics view ---------- */
const TB = `
:host{display:flex;align-items:center;height:34px;flex:none;background:#eeeef2;font-size:15px;white-space:nowrap;color:#222}
button{display:flex;align-items:center;justify-content:center;height:28px;flex:none;width:27px}
.on{border:1px solid #4da3f0;width:26px;background:#f2f4fa}
.s{width:1px;height:26px;background:#cccedb;margin:0 3px;flex:none}
button.w{width:auto;gap:4px;justify-content:flex-start}
.d{border:4px solid transparent;border-top:5px solid #717171;border-bottom:0}
tool-grip{margin:0 8px 0 12px}`;
define('view-toolbar', TB + `:host{padding-bottom:1px}.z{width:28px}
`, () => {
  const b = (n, c = '') => `<button class="${c}" aria-label="${n}">${ic(n)}</button>`, s = '<i class="s"></i>', d = '<i class="d"></i>';
  return '<tool-grip></tool-grip>' + b('zback') + b('zfwd', 'z') + s + b('shade', 'on') + b('shade2', 'z') + b('swap', 'z') + s + b('vis') + s +
    `<button class="on" style="width:42px;gap:6px;margin-left:1px" aria-label="rotate">${ic('rot')}${d}</button>` + b('move') + b('zud') + b('zin', 'z') + b('zfit') + b('zsel') + s +
    `<button class="w" style="margin:0 9px 0 7px">选择</button><button class="w" style="width:72px">${ic('rcur')}模式${d}</button>` +
    b('sel0') + b('sel1', 'z') + b('sel2') + b('sel3', 'z') + b('sel4') + b('sel5') + b('sel6', 'z') + b('sel7') + b('xyz') + b('lbl', 'z') + s +
    `<button class="w" style="width:94px;margin-left:5px">${ic('clip')}剪贴板${d}</button><button class="w" style="width:34px;margin-right:6px">[ 空 ]</button>` + s +
    `<button class="w" style="width:76px;margin-left:6px">${ic('ext')}扩展${d}</button><button class="w" style="width:106px">${ic('loc')}选择依据${d}</button><button class="w">${ic('conv')}转换${d}</button><button style="color:#111;margin-top:14px" aria-label="more">${ic('down')}</button>`;
});
function patch(L0, R0, b0, L1, R1, b1, n, m, fill, uo = 0) {
  const pt = (u, v) => {
    const lx = L0[0] + (L1[0] - L0[0]) * v, ly = L0[1] + (L1[1] - L0[1]) * v, rx = R0[0] + (R1[0] - R0[0]) * v, ry = R0[1] + (R1[1] - R0[1]) * v;
    const dx = rx - lx, dy = ry - ly, k = Math.hypot(dx, dy), b = b0 + (b1 - b0) * v, a = Math.PI * u;
    return [(lx + rx) / 2 - Math.cos(a) * dx / 2 - dy / k * b * Math.sin(a), (ly + ry) / 2 - Math.cos(a) * dy / 2 + dx / k * b * Math.sin(a)];
  };
  const arc = v => { const p = []; for (let i = 0; i <= 30; i++) p.push(pt(i / 30, v)); return p; };
  const str = p => p.map(q => q[0].toFixed(1) + ' ' + q[1].toFixed(1)).join('L');
  let s = `<path d="M${str(arc(0))}L${str(arc(1).reverse())}z" fill="${fill}" stroke="#111" stroke-width="4"/>`, d = '';
  for (let j = 1; j <= m; j++) d += 'M' + str(arc(j / m));
  for (let i = 1; i <= n; i++) { const u = (i - uo) / n; if (u < 1) d += 'M' + str([pt(u, 0), pt(u, 1)]); }
  return s + `<path d="${d}" fill="none" stroke="#000" stroke-opacity=".85" stroke-width="3"/>`;
}
define('bolt-model', `:host{display:block}svg{display:block;width:100%;height:100%}`, () => {
  let face = '';
  for (let r = 1; r <= 13; r++) face += `<ellipse rx="${r * 23}" ry="${(r * 3.9).toFixed(1)}"/>`;
  for (let k = 0; k < 32; k++) { const a = k * Math.PI / 16, c = Math.cos(a), s = Math.sin(a); face += `<path d="M${(c * 110).toFixed(1)} ${(s * 18).toFixed(1)}L${(c * 300).toFixed(1)} ${(s * 50).toFixed(1)}"/>`; }
  for (let k = -5; k <= 5; k++) face += `<path d="M${k * 20 - 30} -17L${k * 20 + 30} 17M${k * 20 + 30} -17L${k * 20 - 30} 17"/>`;
  return `<svg viewBox="0 0 1320 1320" role="img" aria-label="bolt"><defs>
<linearGradient id="h" gradientUnits="userSpaceOnUse" x1="170" y1="470" x2="670" y2="120"><stop offset="0" stop-color="#555"/><stop offset=".2" stop-color="#4a4a4a"/><stop offset=".4" stop-color="#858585"/><stop offset=".7" stop-color="#bcbcbc"/><stop offset="1" stop-color="#cdcdcd"/></linearGradient>
<linearGradient id="s" gradientUnits="userSpaceOnUse" x1="500" y1="650" x2="730" y2="460"><stop offset="0" stop-color="#5c5c5c"/><stop offset=".22" stop-color="#484848"/><stop offset=".5" stop-color="#909090"/><stop offset=".8" stop-color="#c4c4c4"/><stop offset="1" stop-color="#d0d0d0"/></linearGradient>
<linearGradient id="g" gradientUnits="userSpaceOnUse" x1="810" y1="990" x2="1018" y2="785"><stop offset="0" stop-color="#006a00"/><stop offset=".2" stop-color="#005200"/><stop offset=".5" stop-color="#009a00"/><stop offset=".75" stop-color="#00e000"/><stop offset="1" stop-color="#00f000"/></linearGradient></defs>` +
    patch([605, 777], [812, 575], 20, [1012, 1200], [1224, 995], 26, 13, 9, 'url(#g)', .3) +
    patch([330, 435], [578, 262], 24, [605, 777], [812, 575], 20, 15, 7, 'url(#s)') +
    patch([122, 392], [615, 50], 50, [220, 534], [710, 188], 40, 15, 3, 'url(#h)', .4) +
    `<g transform="translate(368 222) rotate(-34.800)"><ellipse rx="300" ry="50" fill="#555" stroke="#111" stroke-width="4"/><g fill="none" stroke="#0a0a0a" stroke-width="3">${face}</g></g>
<path d="M808 962L680 1088" stroke="#0000b0" stroke-width="17" stroke-linecap="round"/><path d="M680 1088L548 1220" stroke="#009a10" stroke-width="17"/><path d="M676 1082L545 1214" stroke="#20c030" stroke-width="4"/>
<path d="M485 1280l50-72q18 6 24 24z" fill="#a00000"/><path d="M485 1280l63-58 11 10z" fill="#5a0000"/></svg>`;
});
define('scene-view', `
:host{display:block;position:relative;flex:1;min-height:0;overflow:hidden;background:linear-gradient(#6b8bdf,#fff);color:#000;font-family:"DejaVu Sans Condensed","Noto Sans CJK SC",sans-serif;font-size:13px}
.cap{padding:21px 0 0 20px;line-height:20px}
.cap p{margin:0}
bolt-model{position:absolute;left:calc(50% - 240px);top:68px;width:440px;height:440px}
.logo{position:absolute;right:31px;top:28px;text-align:right;color:#fff}
.logo b{display:block;font:900 35px/40px "Noto Sans CJK SC","Open Sans",sans-serif}
.logo span{display:block;font:300 21px/18px "Noto Sans CJK SC",sans-serif}
.logo strong{font-weight:700}
.scale{position:absolute;bottom:20px;left:calc(50% - 234px);width:466px}
.scale .r{display:flex;justify-content:space-between;line-height:16px}
.scale .r span{width:80px;text-align:center;margin:0 -40px;white-space:nowrap}
.scale .lo{padding:0 117px}
.bar{height:12px;border:1px solid #000;background:linear-gradient(90deg,#000 25%,#fff 25% 50%,#000 50% 75%,#fff 75%);margin:0 0 4px}
.triad{position:absolute;right:20px;bottom:20px;width:110px;height:160px}
`, `<div class="cap"><p><b>B: Static Structural</b></p><p>力反应</p><p>2022/10/18 0:16</p></div>
<bolt-model></bolt-model>
<div class="logo"><b>ANSYS</b><span>2020 <strong>R2</strong></span></div>
<div class="scale"><div class="r"><span>0.000</span><span>0.035</span><span style="text-indent:22px">0.070 (m)</span></div><div class="bar"></div><div class="r lo"><span>0.018</span><span>0.053</span></div></div>
<svg class="triad" viewBox="1790 625 110 160"><defs><radialGradient id="c"><stop offset="0" stop-color="#30e8e8"/><stop offset="1" stop-color="#00a8a8"/></radialGradient></defs>
<text x="1799" y="698" fill="#e02020">X</text>
<path d="M1816 706L1860 662" stroke="#008a00" stroke-width="5"/><path d="M1872 651l-8 17q-8-2-11-10z" fill="#009a00"/><path d="M1872 651l-8 17-6-4z" fill="#006000"/>
<path d="M1816 707L1859 751" stroke="#0000a0" stroke-width="5"/><path d="M1870 762l-18-6q2-8 9-11z" fill="#0000c0"/><path d="M1870 762l-18-6 5-6z" fill="#000060"/>
<circle cx="1806" cy="702" r="8" fill="#b80000"/><path d="M1804 699l13 6-12 1z" fill="#500000"/><circle cx="1861" cy="703" r="8" fill="url(#c)"/>
<text x="1880" y="641" fill="#10b010">Y</text><text x="1878" y="772" fill="#2020f0">Z</text></svg>`);

/* ---------- graph ---------- */
define('graph-toolbar', TB + `.s{margin:0 4px}.box{border:1px solid #cccedb;width:73px;height:28px;padding:0 4px;color:#a0a0a0;background:#eeeef2}
mini-select{width:123px;height:28px;margin-right:2px}`, () => {
  const b = (n, c = '') => `<button class="${c}" aria-label="${n}">${ic(n)}</button>`, s = '<i class="s"></i>';
  return '<tool-grip></tool-grip><span style="margin:0 6px">动画</span>' + b('first') + b('play') + b('stop', 'on') + b('last') + s + b('g1', 'on') + b('g2') + s +
    '<mini-select label="帧" value="20 帧"></mini-select><mini-select label="时长" value="2 Sec (自动)"></mini-select>' + `<i class="s" style="margin:0 2px"></i>` + b('exp') + s + b('zplay') + b('rgb') + b('upd') + s + b('film1') + b('film2') + s + b('wave') + '<input class="box" aria-label="周期" value="3 Cycles" disabled>' + `<button style="width:14px;color:#111;margin-top:12px" aria-label="more">${ic('down')}</button>`;
});
define('graph-panel', `
:host{display:flex;flex-direction:column;flex:855;min-width:0}
.c{flex:1;background:#fff;padding:31px 30px 14px 0;display:grid;grid-template-columns:56px 9px 1fr;grid-template-rows:66px 8px 1fr 19px;font:700 14px/18px "DejaVu Sans Condensed",sans-serif;color:#000}
.n{writing-mode:vertical-rl;transform:rotate(180deg);justify-self:end;align-self:center;margin:0 9px 6px 0;font-size:16px}
.yt{display:flex;flex-direction:column;justify-content:space-between}
.yt i{height:1px;background:#b0b0b0}
.plot{border:1px solid #b8b8b8;position:relative}
.plot i{position:absolute;left:-3px;width:4px;height:4px}
.xt{grid-column:3;display:flex;justify-content:space-between}
.xt i{width:1px;background:#b0b0b0}
.s{grid-column:3;text-align:center;align-self:end;margin-bottom:8px}
.r{grid-column:3;border:1px solid #999;height:19px}
`, `<dock-header>图形</dock-header><graph-toolbar></graph-toolbar><div class="c"><span class="n">[N]</span><div class="yt">${'<i></i>'.repeat(11)}</div><div class="plot"><i style="top:-2px;background:#a000c8"></i><i style="top:30px;background:#00c"></i><i style="bottom:-2px;background:#008a00"></i></div><div class="xt">${'<i></i>'.repeat(11)}</div><div class="s">[S]</div><div class="r"></div></div>`);

/* ---------- tabular data ---------- */
define('table-panel', `
:host{display:flex;flex-direction:column;flex:644;min-width:0;background:#a0a0a0}
table{border-collapse:separate;border-spacing:0;table-layout:fixed;width:593px;color:#1e1e1e}
tr{height:23px}
th,td{padding:0 3px;text-align:left;font-weight:400;white-space:nowrap;line-height:18px;overflow:hidden}
th{background:#f0f0f0;border:solid #777;border-width:0 1px 1px 0;box-shadow:inset 1px 1px #fff}
td{background:#e7e6e2;border:solid #b4b4b4;border-width:0 1px 1px 0}
label{display:flex;align-items:center;gap:7px}
input{appearance:none;width:17px;height:17px;background:#fff;border:1px solid #666;border-width:2px 0 0 2px;position:relative;flex:none}
input::after{content:"";position:absolute;left:5px;top:0;width:5px;height:10px;border:solid #000;border-width:0 3px 3px 0;transform:rotate(40deg)}
`, () => {
  const h = (t, c) => `<th scope="col"><label style="color:${c}"><input type="checkbox" checked>${t}</label></th>`;
  return `<dock-header>表格数据</dock-header><table><colgroup><col style="width:18px"><col style="width:61px"><col style="width:124px"><col style="width:124px"><col style="width:124px"><col></colgroup>
<tr><th></th><th scope="col">时间 [S]</th>${h('力反应 (X) [N]', '#c00000')}${h('力反应 (Y) [N]', '#009000')}${h('力反应 (Z) [N]', '#0000d0')}${h('力反应 (总计) [N]', '#a000d0')}</tr>
<tr><th scope="row">1</th><td>1.</td><td>1.0626e-006</td><td>-100.</td><td>3.2295e-006</td><td>100.</td></tr></table>`;
});

/* ---------- status bar ---------- */
define('status-bar', `
:host{display:flex;position:relative;height:28px;flex:none;background:#007acc;border-bottom:2px solid #1d3f5c;color:#fff;font-size:15px;line-height:20px;justify-content:flex-end;align-items:center;padding:2px 10px 0 0;white-space:nowrap}
.m{display:flex;align-items:center;gap:3px;margin-right:23px;position:relative}
.m b{position:absolute;left:8px;top:-4px;color:#111;font-size:15px;font-weight:600}
.u{display:flex;align-items:center;gap:4px;margin:0 24px 0 22px}
.mark{position:absolute;right:17px;top:-6px;font-size:20px;line-height:26px;color:rgba(225,230,238,.85);text-shadow:1px 1px 1px #333}
`, `<span class="m">${ic('msg', 20)}<b>0</b>无消息</span><span>无选择</span><span class="u">${ic('up')}度量标准（m、kg、N、s、V、A）</span><span>度</span><span style="margin:0 22px">rad</span><span>摄氏度</span><span class="mark">CSDN @没角の独角兽</span>`);

define('mech-app', `
:host{display:flex;flex-direction:column;height:100vh}
main{flex:1;min-height:0;display:grid;grid-template-columns:412px 1fr;column-gap:5px}
.l,.r{display:flex;flex-direction:column;min-height:0;min-width:0;gap:5px}
.v{display:flex;flex-direction:column;flex:1;min-height:0}
.b{display:flex;height:242px;gap:4px}
`, `<mech-titlebar></mech-titlebar><mech-ribbon></mech-ribbon><main><div class="l"><outline-panel></outline-panel><details-panel></details-panel></div>
<div class="r"><div class="v"><view-toolbar></view-toolbar><scene-view></scene-view></div><div class="b"><graph-panel></graph-panel><table-panel></table-panel></div></div></main><status-bar></status-bar>`);
</script>
</body>
</html>
